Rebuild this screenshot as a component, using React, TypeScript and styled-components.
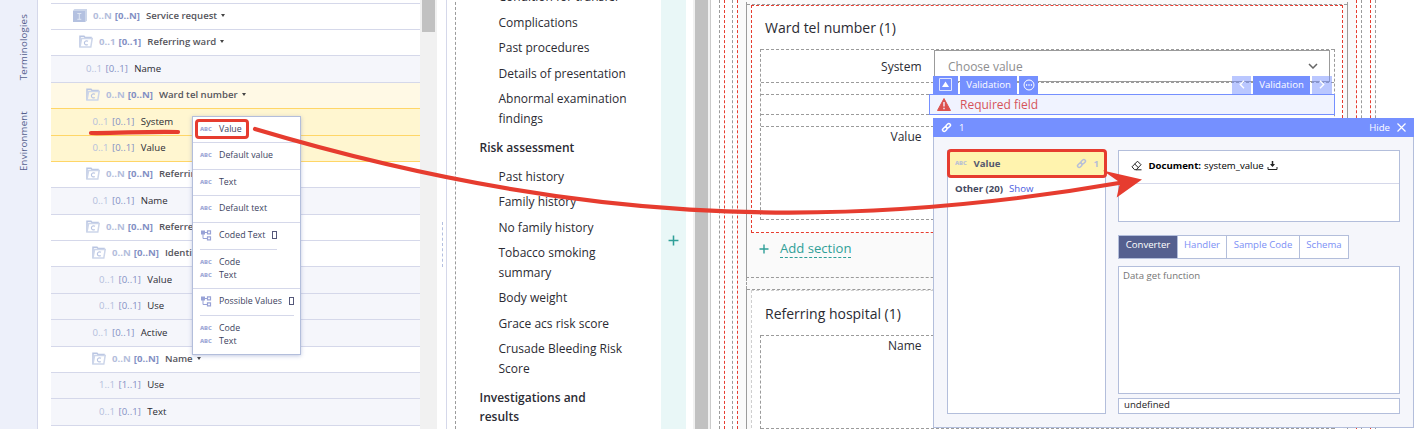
import React from "react";
import styled, { createGlobalStyle, css } from "styled-components";

const GlobalStyle = createGlobalStyle`
  * { box-sizing: border-box; }
  html, body { margin: 0; padding: 0; overflow: hidden; background: #fff; }
  body { font-family: "Open Sans", "Noto Sans", sans-serif; color: #2b2b33; }
`;

const line = "#d5d8ea";
const edge = "#b3bedb";
const blue = "#7590ff";
const red = "#e63c2f";
const dash = "#9b9b9b";

const Page = styled.div`
  position: relative;
  display: flex;
  width: 1419px;
  height: 429px;
  overflow: hidden;
`;

/* ---------- side rail ---------- */
const Rail = styled.nav`
  width: 38px;
  flex: none;
  background: #edf0fa;
  border-right: 1px solid ${line};
  display: flex;
  flex-direction: column;
  align-items: center;
  gap: 31px;
  padding: 14px 0 0 11px;
`;
const RailTab = styled.span`
  writing-mode: vertical-rl;
  transform: rotate(180deg);
  font-size: 9.6px;
  letter-spacing: 0.22px;
  line-height: 14px;
  font-weight: 500;
  color: #55608e;
`;

/* ---------- tree ---------- */
const Tree = styled.div`
  width: 369px;
  margin-left: 13px;
  flex: none;
`;
const tones = {
  parent: css`background: #fff; border-color: ${line};`,
  leaf: css`background: #f5f6fb; border-color: ${line};`,
  warm: css`background: #fff9e5; border-color: #ffd667;`,
  active: css`background: #fff6d0; border-color: #ffd667;`,
};
type Tone = keyof typeof tones;
const TreeRow = styled.div<{ $h: number; $indent: number; $tone: Tone }>`
  height: ${(p) => p.$h}px;
  padding: 0 0 2px ${(p) => p.$indent}px;
  border-bottom: 1px solid;
  display: flex;
  align-items: center;
  font-size: 9.6px;
  white-space: nowrap;
  ${(p) => tones[p.$tone]}
  & > svg { flex: none; margin-right: 6px; }
`;
const Actual = styled.span<{ $bold: boolean }>`
  color: #b4bedc;
  font-weight: ${(p) => (p.$bold ? 700 : 400)};
  width: ${(p) => (p.$bold ? "auto" : "19.5px")};
  margin-right: ${(p) => (p.$bold ? "3px" : "0")};
`;
const Allowed = styled.span<{ $bold: boolean }>`
  color: #8390c4;
  font-weight: ${(p) => (p.$bold ? 700 : 400)};
  margin-right: ${(p) => (p.$bold ? "6px" : "6.5px")};
`;
const NodeName = styled.span<{ $bold: boolean }>`
  font-weight: ${(p) => (p.$bold ? 600 : 400)};
  color: ${(p) => (p.$bold ? "#55555c" : "#2b2b33")};
`;
const Caret = styled.span`
  margin-left: 4px;
  border: 2.5px solid transparent;
  border-top: 3px solid #444;
  border-bottom: 0;
`;

const FolderIcon = () => (
  <svg width="14" height="13" viewBox="0 0 14 13" fill="none">
    <path d="M1 12V1.2h4l1 1.3h6v1.5" stroke="#b9c5e2" strokeWidth="1.5" />
    <path d="M1 12 2.6 3.4h10.6L11.8 12Z" stroke="#cdd6ea" strokeWidth="1.5" />
    <path d="M9 6.3C7.600 5.300 5.500 5.900 5.400 7.900S7.400 10.300 8.700 9.400" stroke="#b9c5e2" strokeWidth="1.2" />
  </svg>
);
const InstanceIcon = () => (
  <svg width="14" height="13" viewBox="0 0 14 13">
    <path d="M0 1.500 1.500 0H14v11.500L12.500 13H0Z" fill="#ccd6ea" />
    <path d="M0 2h12v11H0Z" fill="#b4c1e0" />
    <path d="M4.300 4.500h4M4.300 10.300h4M6.300 4.500v6" stroke="#dfe6f3" strokeWidth="1" />
  </svg>
);

type Node = {
  h: number;
  indent: number;
  tone: Tone;
  a: string;
  b: string;
  name: string;
  icon?: "instance" | "folder";
};
const nodes: Node[] = [
  { h: 26, indent: 22, tone: "parent", a: "0..N", b: "[0..N]", name: "Service request", icon: "instance" },
  { h: 26, indent: 28, tone: "parent", a: "0..1", b: "[0..1]", name: "Referring ward", icon: "folder" },
  { h: 27, indent: 35, tone: "leaf", a: "0..1", b: "[0..1]", name: "Name" },
  { h: 26, indent: 35, tone: "warm", a: "0..N", b: "[0..N]", name: "Ward tel number", icon: "folder" },
  { h: 27, indent: 41.500, tone: "active", a: "0..1", b: "[0..1]", name: "System" },
  { h: 26, indent: 41.500, tone: "active", a: "0..1", b: "[0..1]", name: "Value" },
  { h: 26, indent: 35, tone: "parent", a: "0..N", b: "[0..N]", name: "Referring hospital", icon: "folder" },
  { h: 27, indent: 41.500, tone: "leaf", a: "0..1", b: "[0..1]", name: "Name" },
  { h: 26, indent: 35, tone: "parent", a: "0..N", b: "[0..N]", name: "Referred by", icon: "folder" },
  { h: 26, indent: 41, tone: "parent", a: "0..N", b: "[0..N]", name: "Identifier", icon: "folder" },
  { h: 27, indent: 48, tone: "leaf", a: "0..1", b: "[0..1]", name: "Value" },
  { h: 26, indent: 48, tone: "leaf", a: "0..1", b: "[0..1]", name: "Use" },
  { h: 27, indent: 41.500, tone: "leaf", a: "0..1", b: "[0..1]", name: "Active" },
  { h: 26, indent: 41, tone: "parent", a: "0..N", b: "[0..N]", name: "Name", icon: "folder" },
  { h: 26, indent: 48, tone: "leaf", a: "1..1", b: "[1..1]", name: "Use" },
  { h: 27, indent: 48, tone: "leaf", a: "0..1", b: "[0..1]", name: "Text" },
];
const TreeTop = styled.div`
  height: 4px;
  border-bottom: 1px solid ${line};
`;

/* ---------- scrollbars and splitters ---------- */
const TreeScroll = styled.div`
  width: 17px;
  flex: none;
  background: #f1f1f1;
  padding: 0 2px;
`;
const Thumb = styled.div<{ $h: string }>`
  height: ${(p) => p.$h};
  background: #c1c1c1;
`;
const Splitter = styled.div`
  width: 10px;
  flex: none;
  border-right: 1px solid ${line};
  padding: 222px 3px 0 5px;
`;
const Grip = styled.div`
  height: 45px;
  width: 1px;
  border-left: 1px dashed #b4c0e0;
`;

/* ---------- contents list ---------- */
const Contents = styled.div`
  width: 206px;
  margin-left: 8px;
  flex: none;
  border-left: 1px dashed ${dash};
  padding-left: 23.5px;
  font-size: 12px;
  line-height: 19.2px;
  margin-top: -13px;
`;
const Entry = styled.div`
  padding-left: 19px;
  padding-bottom: 6.4px;
  width: 180px;
  white-space: pre-line;
`;
const Heading = styled.div`
  font-weight: 600;
  padding: 4px 0 9.3px;
  white-space: pre-line;
`;
const AddStrip = styled.div`
  width: 25px;
  flex: none;
  background: #e9f7f7;
  padding: 235px 0 0 7px;
`;
const FormScroll = styled.div`
  width: 18px;
  margin-left: 7px;
  flex: none;
  background: #f1f1f1;
  border-right: 1px solid #ccc;
  padding: 0 2px;
`;
const PlusMark = styled.svg`
  display: block;
  flex: none;
`;
const Plus = ({ size }: { size: number }) => (
  <PlusMark width={size} height={size} viewBox="0 0 10 10">
    <path d="M5 0.500v9M0.500 5h9" stroke="#2f9f98" strokeWidth="1.400" />
  </PlusMark>
);

/* ---------- form ---------- */
const Frame = styled.div<{ $color: string; $pad: string }>`
  height: 100%;
  border: 0 dashed ${(p) => p.$color};
  border-width: 0 1px;
  padding: ${(p) => p.$pad};
`;
const OuterFrame = styled(Frame)`
  width: 657px;
  flex: none;
  margin-left: 8px;
`;
const GreyFrame = styled(Frame)`
  background: #fafafa;
`;
const Group = styled.div<{ $h: number; $top: number }>`
  height: ${(p) => p.$h}px;
  padding-top: ${(p) => p.$top}px;
  border: 1px solid ${dash};
  border-top: 0;
  border-bottom: 1px dashed ${dash};
`;
const GroupGap = styled.div`
  height: 11px;
  border: 0 dashed ${dash};
  border-width: 0 1px;
`;
const GroupBody = styled.div`
  border-top: 1px dashed ${dash};
  padding: 0 4px;
`;
const Section = styled.div<{ $color: string; $h: number }>`
  height: ${(p) => p.$h}px;
  border: 1px dashed ${(p) => p.$color};
  background: #fff;
  padding: 0 7px 0 8px;
`;
const SectionTitle = styled.h2<{ $h: number; $line: number }>`
  margin: 0;
  height: ${(p) => p.$h}px;
  padding-left: 5px;
  font-size: 14px;
  font-weight: 500;
  line-height: ${(p) => p.$line}px;
`;
const Fields = styled.div`
  border: 0 dashed ${dash};
  border-width: 0 1px;
  display: flex;
  flex-direction: column;
  gap: 11px;
`;
const Field = styled.div<{ $h: number }>`
  height: ${(p) => p.$h}px;
  border: 0 dashed ${dash};
  border-width: 1px 0;
  display: flex;
`;
const Label = styled.label<{ $line: number }>`
  width: 160.500px;
  flex: none;
  text-align: right;
  font-size: 12px;
  line-height: ${(p) => p.$line}px;
`;
const Select = styled.div`
  margin-left: 12.500px;
  width: 396px;
  height: 32px;
  border: 1px solid ${dash};
  display: flex;
  align-items: center;
  justify-content: space-between;
  padding: 0 11px 0 13px;
  font-size: 12px;
  color: #8e8e8e;
`;
const AddSection = styled.div`
  display: flex;
  align-items: center;
  gap: 11px;
  padding: 6px 0 0 8px;
  font-size: 13.1px;
  font-weight: 500;
  line-height: 18px;
  color: #2f9f98;
`;
const AddText = styled.span`
  border-bottom: 1px dashed #2f9f98;
`;

/* ---------- validation overlay ---------- */
const Validation = styled.div`
  position: absolute;
  left: 929px;
  top: 76px;
  width: 406px;
`;
const Chips = styled.div`
  display: flex;
  gap: 2px;
  padding: 0 3px 0 4px;
  height: 18px;
`;
const Chip = styled.div<{ $w: number; $faint?: boolean }>`
  width: ${(p) => p.$w}px;
  background: ${(p) => (p.$faint ? "rgba(117,144,255,0.5)" : blue)};
  color: #fff;
  font-size: 9.6px;
  font-weight: 500;
  display: flex;
  align-items: center;
  justify-content: center;
  padding-bottom: 1px;
`;
const Spacer = styled.div`
  flex: 1;
`;
const Warning = styled.div`
  height: 21px;
  border: 1px solid ${blue};
  background: #f0f3ff;
  display: flex;
  align-items: center;
  gap: 9px;
  padding-left: 7px;
  font-size: 12px;
  color: #d6535a;
`;

/* ---------- binding panel ---------- */
const Panel = styled.div`
  position: absolute;
  left: 933px;
  top: 118px;
  width: 481px;
  height: 310px;
  background: #f5f6fb;
  border: 1px solid ${edge};
  border-top: 0;
`;
const PanelHead = styled.div`
  height: 19px;
  margin: 0 -1px;
  background: ${blue};
  color: #fff;
  font-size: 9.6px;
  font-weight: 500;
  display: flex;
  align-items: center;
  padding: 0 8px 1px;
  gap: 7px;
`;
const PanelBody = styled.div`
  display: flex;
  gap: 12px;
  padding: 13px 13px 0;
`;
const Attributes = styled.div`
  width: 159px;
  height: 264px;
  background: #fff;
  border: 1px solid ${edge};
`;
const Attribute = styled.div`
  margin: -2px -2px 0 -1px;
  height: 29px;
  border: 3px solid ${red};
  border-radius: 4px;
  background: #fff3ae;
  display: flex;
  align-items: center;
  padding: 0 5px 1px;
  font-size: 9.6px;
  font-weight: 700;
  color: #54586f;
  gap: 7px;
`;
const Count = styled.span`
  color: #b7bfd8;
  font-weight: 700;
`;
const Other = styled.div`
  display: flex;
  gap: 6px;
  padding: 4px 0 0 7px;
  font-size: 9.6px;
  line-height: 14px;
  color: #44485e;
  font-weight: 700;
`;
const Show = styled.a`
  color: #4b5de0;
  font-weight: 400;
`;
const Editor = styled.div`
  width: 282px;
  font-size: 9.6px;
`;
const Box = styled.div<{ $h: number; $mt: number }>`
  height: ${(p) => p.$h}px;
  margin-top: ${(p) => p.$mt}px;
  background: #fff;
  border: 1px solid ${edge};
`;
const DocumentRow = styled.div`
  height: 33px;
  border-bottom: 1px solid ${line};
  display: flex;
  align-items: center;
  color: #000;
  padding: 0 0 3px 12px;
  b { font-weight: 700; margin: 0 3px 0 6.5px; }
  span { margin-right: 3.5px; }
`;
const Tabs = styled.div`
  display: flex;
  height: 24px;
  margin-top: 13px;
`;
const Tab = styled.div<{ $w: number; $on?: boolean }>`
  width: ${(p) => p.$w}px;
  margin-right: -1px;
  border: 1px solid ${edge};
  background: ${(p) => (p.$on ? "#55608f" : "#fff")};
  color: ${(p) => (p.$on ? "#fff" : "#7b8ff5")};
  font-weight: ${(p) => (p.$on ? 500 : 400)};
  text-align: center;
  line-height: 18px;
`;
const Placeholder = styled.div`
  padding: 2px 4px;
  line-height: 13px;
  color: #757575;
`;
const InputText = styled.div`
  padding-left: 5px;
  line-height: 12px;
  color: #222;
`;

/* ---------- drop-down menu ---------- */
const Menu = styled.div`
  position: absolute;
  left: 192px;
  top: 116px;
  width: 109px;
  height: 239px;
  background: #fff;
  border: 1px solid ${edge};
  box-shadow: 0 1px 4px rgba(120, 135, 190, 0.45);
  font-size: 8.8px;
  color: #3c3f5e;
`;
const MenuRow = styled.div<{ $h: number; $rule?: boolean }>`
  height: ${(p) => p.$h}px;
  border-bottom: ${(p) => (p.$rule ? `1px solid ${line}` : "0")};
  display: flex;
  align-items: center;
  padding: 0 0 2px 7px;
`;
const MenuIcon = styled.span`
  width: 19px;
  flex: none;
  display: flex;
`;
const Brackets = styled.span`
  width: 5px;
  height: 8px;
  margin-left: 7px;
  border: 1px solid #55587a;
`;
const MenuDivider = styled.div<{ $w: number }>`
  height: 1px;
  width: ${(p) => p.$w}px;
  margin-left: 7px;
  background: ${line};
`;
const SubItems = styled.div<{ $rule?: boolean }>`
  height: 39px;
  padding-top: 6px;
  border-bottom: ${(p) => (p.$rule ? `1px solid ${line}` : "0")};
`;
const Abc = styled.span<{ $pale?: boolean }>`
  font-size: 5.8px;
  font-weight: 800;
  letter-spacing: -0.1px;
  color: ${(p) => (p.$pale ? "#bcc3d4" : "#a3acd8")};
  line-height: 8px;
`;

const TreeIcon = () => (
  <svg width="12" height="11" viewBox="0 0 12 11">
    <path d="M1 0.500h4v4h-4Z" fill="#98a2d6" />
    <path d="M3 4v4.500h4M5 2.500h2" stroke="#98a2d6" fill="none" />
    <path d="M7.500 0.800h3v3h-3ZM7.500 6.800h3v3h-3Z" stroke="#98a2d6" strokeWidth="1.200" fill="#fff" />
  </svg>
);
const LinkIcon = ({ color }: { color: string }) => (
  <svg width="11" height="11" viewBox="0 0 11 11" fill="none" stroke={color} strokeWidth="1.500">
    <rect x="-2.500" y="-1.600" width="5" height="3.200" rx="1.600" transform="translate(7.200 3.800) rotate(-45)" />
    <rect x="-2.500" y="-1.600" width="5" height="3.200" rx="1.600" transform="translate(3.800 7.200) rotate(-45)" />
  </svg>
);

const Annotations = styled.svg`
  position: absolute;
  left: 0;
  top: 0;
  pointer-events: none;
`;

const MenuItem = ({ h, label }: { h: number; label: string }) => (
  <MenuRow $h={h} $rule>
    <MenuIcon><Abc>ABC</Abc></MenuIcon>
    {label}
  </MenuRow>
);
const CodedBlock = ({ label, width, last }: { label: string; width: number; last?: boolean }) => (
  <>
    <MenuRow $h={26}>
      <MenuIcon><TreeIcon /></MenuIcon>
      {label}
      <Brackets />
    </MenuRow>
    <MenuDivider $w={width} />
    <SubItems $rule={!last}>
      {["Code", "Text"].map((t) => (
        <MenuRow $h={13} key={t}>
          <MenuIcon><Abc>ABC</Abc></MenuIcon>
          {t}
        </MenuRow>
      ))}
    </SubItems>
  </>
);

export default function App() {
  return (
    <Page>
      <GlobalStyle />
      <Rail>
        <RailTab>Terminologies</RailTab>
        <RailTab>Environment</RailTab>
      </Rail>

      <Tree>
        <TreeTop />
        {nodes.map((n, i) => {
          const bold = !!n.icon;
          return (
            <TreeRow key={i} $h={n.h} $indent={n.indent} $tone={n.tone}>
              {n.icon === "instance" && <InstanceIcon />}
              {n.icon === "folder" && <FolderIcon />}
              <Actual $bold={bold}>{n.a}</Actual>
              <Allowed $bold={bold}>{n.b}</Allowed>
              <NodeName $bold={bold}>{n.name}</NodeName>
              {bold && <Caret />}
            </TreeRow>
          );
        })}
      </Tree>
      <TreeScroll><Thumb $h="32px" /></TreeScroll>
      <Splitter><Grip /></Splitter>

      <Contents>
        <Entry>Condition for transfer</Entry>
        <Entry>Complications</Entry>
        <Entry>Past procedures</Entry>
        <Entry>Details of presentation</Entry>
        <Entry>{"Abnormal examination\nfindings"}</Entry>
        <Heading>Risk assessment</Heading>
        <Entry>Past history</Entry>
        <Entry>Family history</Entry>
        <Entry>No family history</Entry>
        <Entry>{"Tobacco smoking\nsummary"}</Entry>
        <Entry>Body weight</Entry>
        <Entry>Grace acs risk score</Entry>
        <Entry>{"Crusade Bleeding Risk\nScore"}</Entry>
        <Heading>{"Investigations and\nresults"}</Heading>
      </Contents>
      <AddStrip><Plus size={11} /></AddStrip>
      <FormScroll><Thumb $h="100%" /></FormScroll>

      <OuterFrame $color={dash} $pad="0 4px">
        <Frame $color={red} $pad="0 8px 0 7px">
          <Frame $color={dash} $pad="0 4px">
            <GreyFrame $color={red} $pad="2px 8px 0">
              <Group $h={276} $top={2}>
                <GroupBody>
                  <Section $color={red} $h={228}>
                    <SectionTitle $h={43} $line={43}>Ward tel number (1)</SectionTitle>
                    <Fields>
                      <Field $h={34}>
                        <Label $line={33}>System</Label>
                        <Select>
                          Choose value
                          <svg width="10" height="6" viewBox="0 0 10 6">
                            <path d="M1 1l4 4 4-4" stroke="#666" strokeWidth="1.500" fill="none" />
                          </svg>
                        </Select>
                      </Field>
                      <Field $h={21} />
                      <Field $h={94}>
                        <Label $line={19}>Value</Label>
                      </Field>
                    </Fields>
                  </Section>
                  <AddSection>
                    <Plus size={10} />
                    <AddText>Add section</AddText>
                  </AddSection>
                </GroupBody>
              </Group>
              <GroupGap />
              <Group $h={160} $top={0}>
                <GroupBody>
                  <Section $color="#cfcfcf" $h={158}>
                    <SectionTitle $h={44} $line={45}>Referring hospital (1)</SectionTitle>
                    <Fields>
                      <Field $h={94}>
                        <Label $line={19}>Name</Label>
                      </Field>
                    </Fields>
                  </Section>
                </GroupBody>
              </Group>
            </GreyFrame>
          </Frame>
        </Frame>
      </OuterFrame>

      <Validation>
        <Chips>
          <Chip $w={25}>
            <svg width="13" height="13" viewBox="0 0 13 13">
              <path d="M0.500 0.500h12v12h-12Z" fill="none" stroke="#dfe5ff" />
              <path d="M6.500 3.500 10 9H3Z" fill="#fff" />
            </svg>
          </Chip>
          <Chip $w={57}>Validation</Chip>
          <Chip $w={19}>
            <svg width="12" height="12" viewBox="0 0 12 12">
              <circle cx="6" cy="6" r="5" fill="none" stroke="#fff" />
              <path d="M3 6h1.200M5.400 6h1.200M7.800 6h1.200" stroke="#fff" strokeWidth="1.300" />
            </svg>
          </Chip>
          <Spacer />
          <Chip $w={19} $faint>
            <svg width="6" height="9" viewBox="0 0 6 9"><path d="M5 0.800 1.300 4.500 5 8.200" stroke="#fff" strokeWidth="1.400" fill="none" /></svg>
          </Chip>
          <Chip $w={57}>Validation</Chip>
          <Chip $w={20} $faint>
            <svg width="6" height="9" viewBox="0 0 6 9"><path d="M1 0.800 4.700 4.500 1 8.200" stroke="#fff" strokeWidth="1.400" fill="none" /></svg>
          </Chip>
        </Chips>
        <Warning>
          <svg width="14" height="13" viewBox="0 0 14 13">
            <path d="M7 0.500 13.500 12.500H0.500Z" fill="#dc524e" stroke="#dc524e" strokeLinejoin="round" />
            <path d="M7 4v4.500M7 9.700v1.500" stroke="#f0f3ff" strokeWidth="1.400" />
          </svg>
          Required field
        </Warning>
      </Validation>

      <Panel>
        <PanelHead>
          <LinkIcon color="#fff" />
          <span>1</span>
          <Spacer />
          <span>Hide</span>
          <svg width="9" height="9" viewBox="0 0 9 9"><path d="M0.500 0.500l8 8M8.500 0.500l-8 8" stroke="#fff" strokeWidth="1.200" /></svg>
        </PanelHead>
        <PanelBody>
          <Attributes>
            <Attribute>
              <Abc $pale>ABC</Abc>
              Value
              <Spacer />
              <LinkIcon color="#b7bfd8" />
              <Count>1</Count>
            </Attribute>
            <Other>
              Other (20) <Show>Show</Show>
            </Other>
          </Attributes>
          <Editor>
            <Box $h={72} $mt={0}>
              <DocumentRow>
                <svg width="11" height="11" viewBox="0 0 11 11" fill="none" stroke="#222">
                  <path d="M1 6.800 6.500 1.200 10 4.700 5.300 9.700H3.500Z M3.700 4l3.600 3.600M5 9.800h5.500" />
                </svg>
                <b>Document:</b>
                <span>system_value</span>
                <svg width="11" height="11" viewBox="0 0 11 11" fill="none" stroke="#222">
                  <path d="M5.500 1v5" strokeWidth="1.500" />
                  <path d="M3 4h5L5.500 7Z" fill="#222" stroke="none" />
                  <path d="M1 7v2.500h9V7" />
                </svg>
              </DocumentRow>
            </Box>
            <Tabs>
              <Tab $w={60} $on>Converter</Tab>
              <Tab $w={50}>Handler</Tab>
              <Tab $w={74}>Sample Code</Tab>
              <Tab $w={50}>Schema</Tab>
            </Tabs>
            <Box $h={128} $mt={7}>
              <Placeholder>Data get function</Placeholder>
            </Box>
            <Box $h={16} $mt={4}>
              <InputText>undefined</InputText>
            </Box>
          </Editor>
        </PanelBody>
      </Panel>

      <Menu>
        <MenuItem h={26} label="Value" />
        <MenuItem h={27} label="Default value" />
        <MenuItem h={26} label="Text" />
        <MenuItem h={27} label="Default text" />
        <CodedBlock label="Coded Text" width={77} />
        <CodedBlock label="Possible Values" width={94} last />
      </Menu>

      <Annotations width="1419" height="429" viewBox="0 0 1419 429" fill="none" stroke={red}>
        <path d="M91 133 C115 133.500 150 131 178 132" strokeWidth="4.200" strokeLinecap="round" />
        <rect x="196.500" y="120.500" width="51" height="17" rx="2.500" strokeWidth="3" />
        <path d="M255 129 C560 220 820 235 1122 182.500" strokeWidth="4.200" strokeLinecap="round" />
        <path d="M1142 179.500 1102.700 170.500 1120 182.500 1116.700 197.500Z" fill={red} stroke="none" />
      </Annotations>
    </Page>
  );
}
